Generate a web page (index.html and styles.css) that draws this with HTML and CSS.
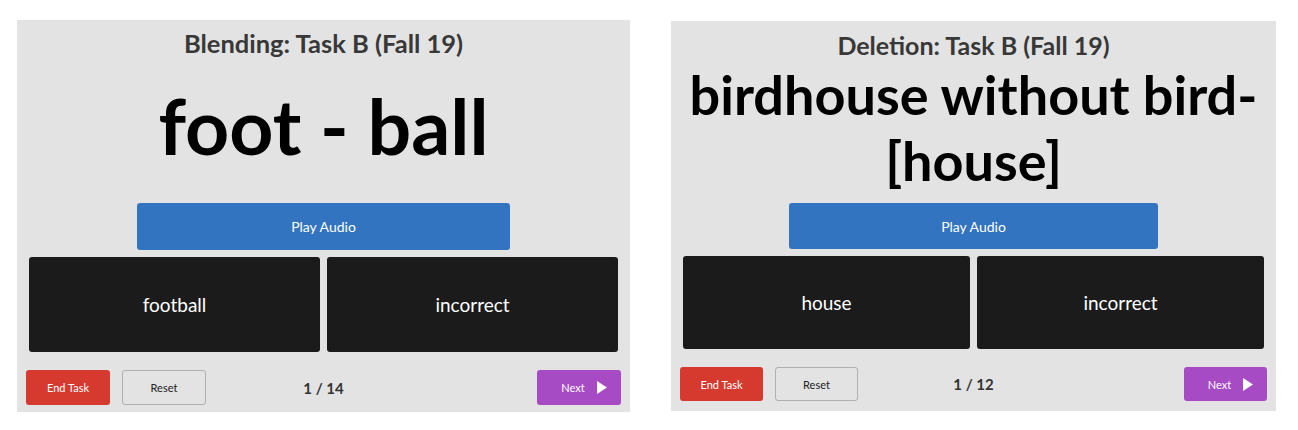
FILE: index.html
```html
<!DOCTYPE html>
<html lang="en">
<head>
<meta charset="utf-8">
<title>Tasks</title>
<link rel="stylesheet" href="styles.css">
</head>
<body>
<div class="stage">
  <section class="panel panel-a">
    <h1 class="title">Blending: Task B (Fall 19)</h1>
    <div class="prompt"><p class="word word-big">foot - ball</p></div>
    <button class="audio">Play Audio</button>
    <div class="choices">
      <button class="choice">football</button>
      <button class="choice">incorrect</button>
    </div>
    <div class="footer">
      <div class="left-btns">
        <button class="btn btn-end">End Task</button>
        <button class="btn btn-reset">Reset</button>
      </div>
      <span class="count">1 / 14</span>
      <button class="btn btn-next">Next <svg class="arrow" viewBox="0 0 10 13" width="10" height="13"><polygon points="0,0 10,6.5 0,13" fill="#fff"/></svg></button>
    </div>
  </section>
  <section class="panel panel-b">
    <h1 class="title">Deletion: Task B (Fall 19)</h1>
    <div class="prompt"><p class="word word-wrap">birdhouse without bird-<wbr>[house]</p></div>
    <button class="audio">Play Audio</button>
    <div class="choices">
      <button class="choice">house</button>
      <button class="choice">incorrect</button>
    </div>
    <div class="footer">
      <div class="left-btns">
        <button class="btn btn-end">End Task</button>
        <button class="btn btn-reset">Reset</button>
      </div>
      <span class="count">1 / 12</span>
      <button class="btn btn-next">Next <svg class="arrow" viewBox="0 0 10 13" width="10" height="13"><polygon points="0,0 10,6.5 0,13" fill="#fff"/></svg></button>
    </div>
  </section>
</div>
</body>
</html>
```
FILE: styles.css
```css
* { box-sizing: border-box; }
html, body { margin: 0; padding: 0; background: #fff; }
body { font-family: Lato, "Open Sans", sans-serif; }
.stage {
  display: flex;
  align-items: flex-start;
  gap: 41px;
  padding: 20px 0 0 17px;
}
.panel {
  background: #e3e3e3;
  display: flex;
  flex-direction: column;
  align-items: center;
}
.panel-a { width: 613px; height: 392px; padding-bottom: 7px; }
.panel-b { width: 605px; height: 390px; margin-top: 1px; padding-bottom: 10px; }
.title {
  margin: 0;
  padding-top: 8px;
  height: 46px;
  flex: none;
  font-size: 25.5px;
  font-weight: 700;
  color: #383838;
  line-height: 30px;
}
.panel-b .title { font-size: 25px; padding-top: 9px; }
.prompt {
  flex: 1;
  min-height: 0;
  width: 100%;
  display: flex;
  align-items: center;
  justify-content: center;
}
.word {
  margin: 0;
  font-weight: 700;
  color: #000;
  text-align: center;
}
.word-big { font-size: 77px; line-height: 1; padding-bottom: 18px; }
.word-wrap { font-size: 54px; line-height: 66px; padding: 0 8px 14px; }
.audio {
  width: 61%;
  height: 47px;
  flex: none;
  border: none;
  border-radius: 3px;
  background: #3274c0;
  color: #fff;
  font-family: inherit;
  font-size: 14px;
}
.choices {
  width: 100%;
  flex: none;
  display: flex;
  gap: 7px;
  padding: 7px 12px 0;
}
.choice {
  flex: 1;
  height: 95px;
  border: none;
  border-radius: 3px;
  background: #1b1b1b;
  color: #fff;
  font-family: inherit;
  font-size: 19px;
}
.footer {
  width: 100%;
  flex: none;
  display: flex;
  align-items: center;
  justify-content: space-between;
  position: relative;
  padding: 18px 9px 0;
}
.left-btns { display: flex; gap: 12px; }
.btn {
  width: 84px;
  height: 35px;
  border-radius: 3px;
  font-family: inherit;
  font-size: 11px;
  border: none;
}
.panel-b .audio { height: 46px; }
.panel-b .choice { height: 93px; }
.panel-b .btn { width: 83px; height: 34px; }
.btn-end { background: #d63a2f; color: #fff; }
.btn-reset { background: #e3e3e3; border: 1px solid #b0b0b0; color: #222; }
.btn-next {
  background: #a64bc4;
  color: #fff;
  display: flex;
  align-items: center;
  justify-content: center;
  gap: 12px;
  padding: 0 0 0 10px;
}
.arrow { display: block; }
.count {
  position: absolute;
  left: 50%;
  transform: translateX(-50%);
  font-size: 15px;
  font-weight: 700;
  color: #333;
}
```
